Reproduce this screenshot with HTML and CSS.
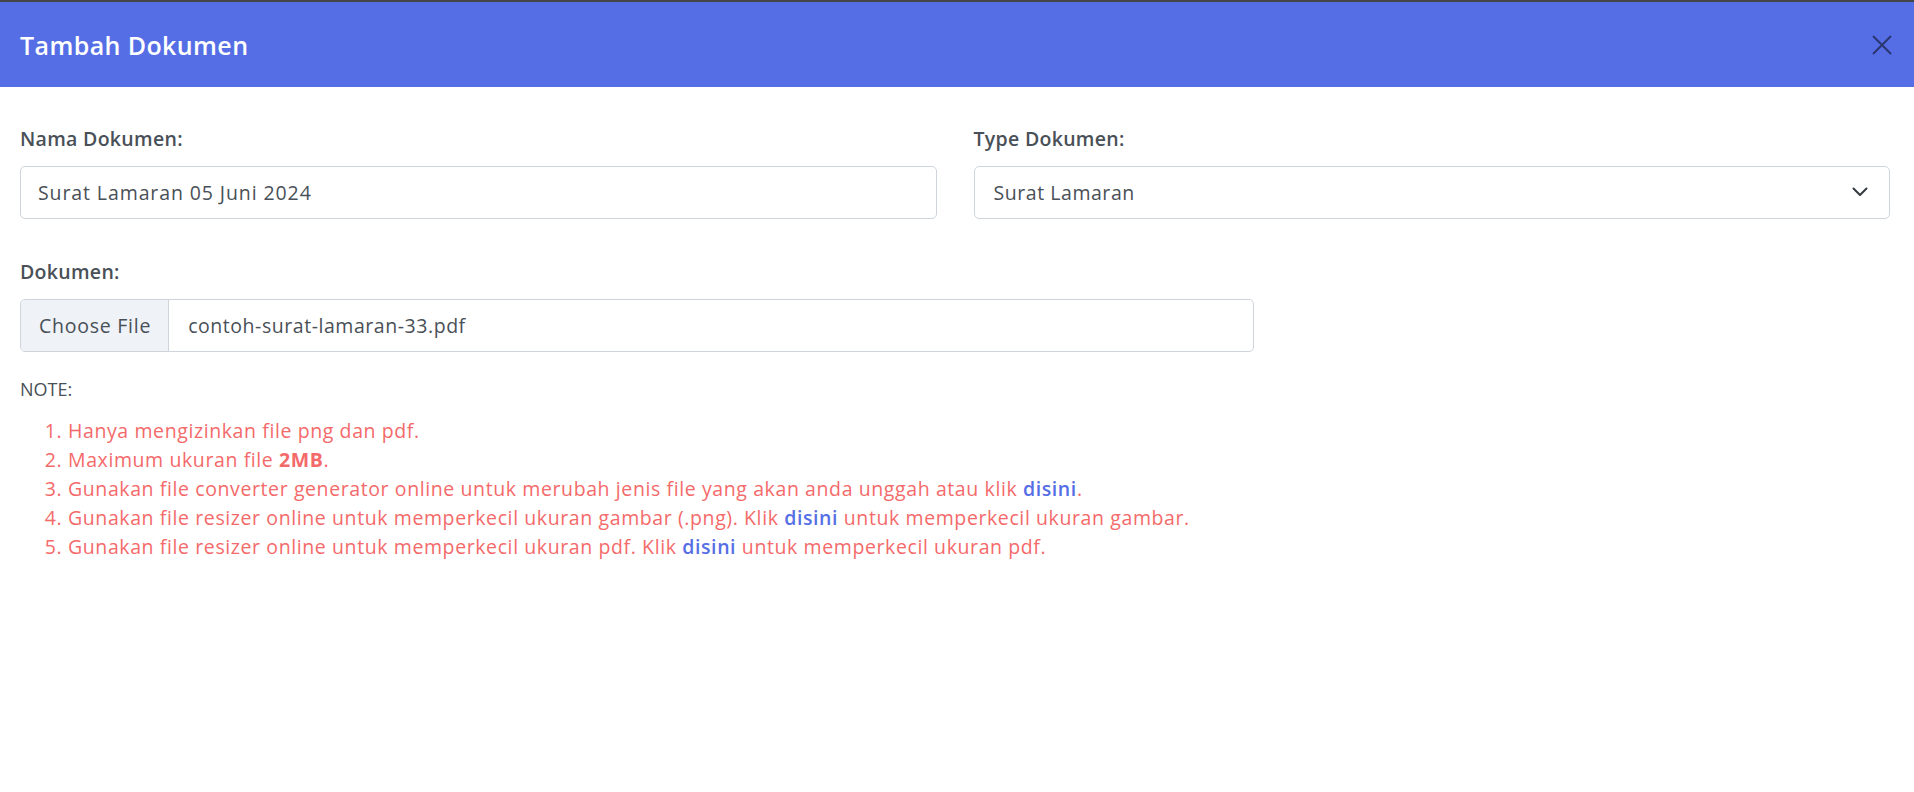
FILE: index.html
```html
<!DOCTYPE html>
<html lang="id">
<head>
<meta charset="utf-8">
<title>Tambah Dokumen</title>
<link rel="stylesheet" href="styles.css">
</head>
<body>
<div class="modal">
  <div class="modal-header">
    <h5 class="modal-title">Tambah Dokumen</h5>
    <button class="btn-close" type="button" aria-label="Close">
      <svg width="20" height="20" viewBox="0 0 20 20"><path d="M1 1 L19 19 M19 1 L1 19" stroke="currentColor" stroke-width="2" fill="none"/></svg>
    </button>
  </div>
  <div class="modal-body">
    <div class="row">
      <div class="field">
        <label class="form-label">Nama Dokumen:</label>
        <input class="form-control" type="text" value="Surat Lamaran 05 Juni 2024">
      </div>
      <div class="field">
        <label class="form-label">Type Dokumen:</label>
        <div class="select-wrap">
          <select class="form-select"><option>Surat Lamaran</option></select>
          <svg class="chevron" width="16" height="10" viewBox="0 0 16 10"><path d="M1.5 1.5 L8 8 L14.5 1.5" stroke="currentColor" stroke-width="2" fill="none" stroke-linecap="round" stroke-linejoin="round"/></svg>
        </div>
      </div>
    </div>
    <div class="row-file">
      <div class="field field-wide">
        <label class="form-label">Dokumen:</label>
        <div class="file-input">
          <span class="file-btn">Choose File</span>
          <span class="file-name">contoh-surat-lamaran-33.pdf</span>
        </div>
      </div>
    </div>
    <p class="note">NOTE:</p>
    <ol class="note-list">
      <li>Hanya mengizinkan file png dan pdf.</li>
      <li>Maximum ukuran file <b>2MB</b>.</li>
      <li>Gunakan file converter generator online untuk merubah jenis file yang akan anda unggah atau klik <a href="#">disini</a>.</li>
      <li>Gunakan file resizer online untuk memperkecil ukuran gambar (.png). Klik <a href="#">disini</a> untuk memperkecil ukuran gambar.</li>
      <li>Gunakan file resizer online untuk memperkecil ukuran pdf. Klik <a href="#">disini</a> untuk memperkecil ukuran pdf.</li>
    </ol>
  </div>
</div>
</body>
</html>
```
FILE: styles.css
```css
* { box-sizing: border-box; }
html, body { margin: 0; padding: 0; background: #fff; }
body {
  font-family: "Open Sans", "Noto Sans", sans-serif;
  color: #495057;
  width: 1914px;
  height: 792px;
  overflow: hidden;
}
.modal { background: #fff; min-height: 792px; }
.modal-header {
  height: 87px;
  border-top: 2px solid #454545;
  background: #556ee6;
  padding: 0 22px 0 20px;
  display: flex;
  align-items: center;
  justify-content: space-between;
}
.modal-title {
  margin: 0;
  color: #fff;
  font-size: 25px;
  font-weight: 600;
  letter-spacing: 0.4px;
}
.btn-close {
  border: 0;
  background: transparent;
  padding: 0;
  width: 20px;
  height: 20px;
  color: #2b3671;
  display: flex;
}
.modal-body {
  padding: 38px 24px 20px 20px;
}
.row {
  display: grid;
  grid-template-columns: 1fr 1fr;
  column-gap: 37px;
}
.row-file {
  margin-top: 39px;
}
.field { display: flex; flex-direction: column; }
.field-wide { width: calc((100% + 37px) * 8 / 12 - 37px); }
.form-label {
  font-size: 19.5px;
  line-height: 27px;
  font-weight: 600;
  color: #495057;
  margin-bottom: 14px;
  letter-spacing: 0.3px;
}
.form-control, .form-select, .file-input {
  height: 53px;
  border: 1px solid #ced4da;
  border-radius: 5px;
  background: #fff;
  font-family: inherit;
  font-size: 19.5px;
  color: #495057;
  letter-spacing: 0.8px;
}
.form-control { padding: 0 17px; outline: none; letter-spacing: 0.9px; }
.select-wrap { position: relative; }
.form-select {
  width: 100%;
  appearance: none;
  -webkit-appearance: none;
  padding: 0 50px 0 19px;
  outline: none;
  letter-spacing: 0.55px;
}
.chevron {
  position: absolute;
  right: 22px;
  top: 21px;
  color: #343a40;
  pointer-events: none;
}
.file-input {
  display: flex;
  align-items: center;
  overflow: hidden;
}
.file-btn {
  height: 100%;
  display: flex;
  align-items: center;
  padding: 0 17px 0 18px;
  background: #eff2f7;
  border-right: 1px solid #ced4da;
  letter-spacing: 0.75px;
}
.file-name { padding-left: 19px; letter-spacing: 0.55px; }
.note {
  margin: 24px 0 0;
  font-size: 18px;
  line-height: 27px;
  font-weight: 400;
  color: #495057;
}
.note-list {
  margin: 13px 0 0;
  padding-left: 48px;
  color: #f46a6a;
  font-size: 19.5px;
  line-height: 29px;
  letter-spacing: 0.6px;
}
.note-list b { font-weight: 700; }
.note-list a {
  color: #556ee6;
  font-weight: 600;
  text-decoration: none;
}
```
